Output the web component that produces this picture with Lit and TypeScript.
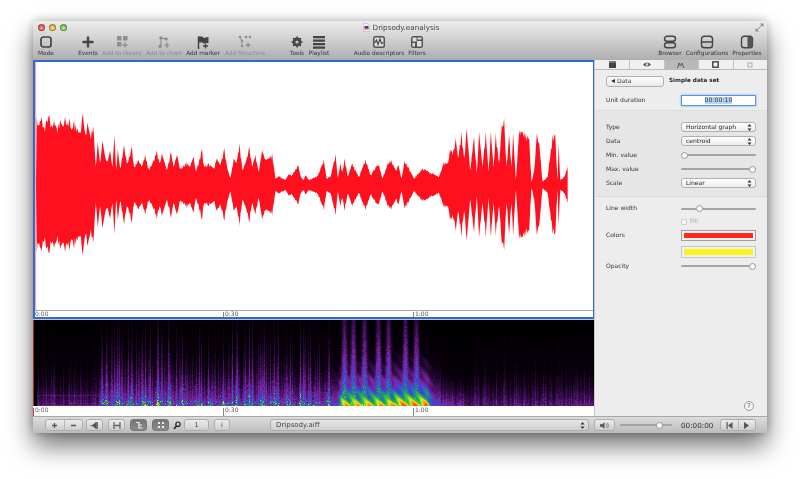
import { LitElement, html, css, svg } from "lit";
import { customElement } from "lit/decorators.js";

const top1: number[][] = [[20,50],[25,75],[35,52],[42,80],[50,60],[58,45],[65,75],[72,62],[80,85],[90,58],[98,80],[105,50],[112,70],[118,55],[125,90],[132,60],[142,85],[150,100],[158,40],[165,100],[172,68],[180,105],[190,80],[197,200],[203,125],[210,190],[217,122],[225,170],[232,185],[240,152],[247,200],[253,105],[258,210],[263,148],[270,205],[282,135],[290,190],[297,170],[305,140],[312,200],[325,180],[335,200],[345,165],[355,205],[365,195],[380,150],[388,190],[395,160],[410,210],[422,155],[430,200],[440,165],[450,205],[470,185],[478,200],[490,170],[497,215],[515,148],[522,200],[535,190],[550,205],[560,175],[570,195],[582,145],[590,200],[600,235],[610,175],[618,190],[628,130],[636,210],[645,190],[657,140],[665,200],[675,165],[685,215],[695,150],[705,178],[715,175],[725,160],[735,235],[745,228],[765,240],[775,222],[785,225],[803,195]];
const top2: number[][] = [[0,228],[8,240],[15,225],[25,240],[35,235],[50,228],[60,205],[70,178],[78,235],[90,230],[105,162],[112,235],[120,190],[125,215],[132,175],[142,230],[155,190],[175,230],[195,178],[210,225],[225,200],[235,195],[245,235],[262,190],[272,180],[285,210],[293,195],[303,235],[312,182],[325,205],[340,235],[365,205],[385,215],[415,230],[430,185],[442,190],[448,148],[458,150],[465,115],[472,175],[482,95],[490,175],[498,85],[508,210],[520,110],[528,220],[535,95],[545,200],[555,95],[563,215],[570,95],[578,200],[585,100],[595,190],[603,75],[610,55],[617,200],[625,105],[632,200],[637,100],[645,240],[655,90],[665,95],[675,100],[685,115],[692,245],[700,210],[708,100],[715,130],[725,245],[740,230],[755,105],[763,105],[770,240],[773,130],[778,240],[790,230],[800,200]];

const wavePts = (): string => {
  const raw = [
    ...top1.map(([x, y]) => [30 + x / 3, (255 - y) / 3]),
    ...top2.map(([x, y]) => [300 + x / 3, (255 - y) / 3]),
  ];
  let s = 777;
  const rnd = () => ((s = (s * 1664525 + 1013904223) >>> 0) / 4294967296);
  const pts: number[][] = [];
  for (let i = 0; i < raw.length - 1; i++) {
    const [x0, a0] = raw[i], [x1, a1] = raw[i + 1];
    pts.push([x0, a0]);
    const n = Math.floor((x1 - x0) / 0.8);
    for (let k = 1; k < n; k++) {
      const t = k / n;
      const a = a0 + (a1 - a0) * t;
      pts.push([x0 + (x1 - x0) * t, a * (0.84 + 0.16 * (k % 2 ? rnd() : 1))]);
    }
  }
  pts.push(raw[raw.length - 1]);
  const up = pts.map(([x, a]) => `${x.toFixed(1)},${(185 - a).toFixed(1)}`);
  const down = pts.slice().reverse().map(([x, a]) => `${x.toFixed(1)},${(185 + a * 0.98).toFixed(1)}`);
  return [...up, "566.7,185", ...down, "36,185"].join(" ");
};

const ic = (body: unknown, w = 18, h = 14) =>
  html`<svg width=${w} height=${h} viewBox="0 0 ${w} ${h}">${body}</svg>`;

const D = "#444";
const G = "#8e8e8e";
const icons: Record<string, unknown> = {
  mode: ic(svg`<rect x="4" y="2" width="10" height="10" rx="2.5" fill="none" stroke=${D} stroke-width="1.7"/>`),
  events: ic(svg`<path d="M9 1.5v11M3.5 7h11" stroke=${D} stroke-width="2.4"/>`),
  library: ic(svg`<g fill=${G}><rect x="4" y="1" width="4.5" height="4.5" rx=".6"/><rect x="10" y="1" width="4.5" height="4.5" rx=".6"/><rect x="4" y="7" width="4.5" height="4.5" rx=".6"/></g><path d="M12 7.5v5M9.5 10h5" stroke=${G} stroke-width="1.4"/>`),
  chart: ic(svg`<path d="M6 11V3.5h5" stroke=${G} stroke-width="1.2" fill="none"/><circle cx="6" cy="3" r="1.7" fill=${G}/><circle cx="11" cy="4" r="1.7" fill=${G}/><circle cx="5" cy="11.5" r="1.7" fill=${G}/><path d="M12 7.5v5.500M9.500 10.200h5" stroke=${G} stroke-width="1.3"/>`),
  marker: ic(svg`<path d="M4.500 14V1.500" stroke=${D} stroke-width="1.500"/><path d="M4.500 1.500h4l1 1.500 5-1v6l-5 .5-1-1h-4z" fill=${D}/><path d="M11.500 8.500v5M9 11h5" stroke=${D} stroke-width="1.300"/>`),
  structure: ic(svg`<g fill=${G}><circle cx="4" cy="2" r="1.300"/><circle cx="10" cy="2" r="1.300"/><circle cx="14" cy="2" r="1.300"/><circle cx="6" cy="6" r="1.300"/><circle cx="6" cy="11" r="1.300"/></g><path d="M4 2l2 4v5" stroke=${G} fill="none"/><path d="M12 7.500v5M9.500 10h5" stroke=${G} stroke-width="1.300"/>`),
  tools: ic(svg`<circle cx="9" cy="7" r="3.400" fill="none" stroke=${D} stroke-width="2"/><path d="M9 1.500v11M3.500 7h11M5.100 3.100l7.800 7.800M12.900 3.100l-7.800 7.800" stroke=${D} stroke-width="1.500"/><circle cx="9" cy="7" r="1.600" fill="#c6c6c6"/>`),
  playlist: ic(svg`<path d="M3 2.200h12M3 5.700h12M3 9.200h12M3 12.700h12" stroke=${D} stroke-width="2.200"/>`),
  audio: ic(svg`<rect x="3" y="1" width="12" height="12" rx="2.500" fill="#555"/><rect x="4.500" y="2.500" width="9" height="9" rx="1" fill="#ddd"/><path d="M4.500 8l2-3 1.500 4.500L10 4l1.500 4.500 2-1" stroke="#444" stroke-width="1.100" fill="none"/>`),
  filters: ic(svg`<rect x="3" y="1" width="12" height="12" rx="2.500" fill="#555"/><rect x="4.500" y="2.500" width="4" height="4" fill="#ddd"/><rect x="9.500" y="2.500" width="4" height="2" fill="#ddd"/><rect x="4.500" y="8" width="2.500" height="3.500" fill="#ddd"/><rect x="9" y="6" width="4.500" height="5.500" fill="#ddd"/>`),
  browser: ic(svg`<g fill="none" stroke=${D} stroke-width="1.400"><rect x="3.500" y="1.200" width="11" height="5" rx="2.500"/><rect x="3.500" y="7.800" width="11" height="5" rx="2.500"/></g>`),
  configs: ic(svg`<rect x="3.500" y="1.200" width="11" height="11.600" rx="2.800" fill="none" stroke=${D} stroke-width="1.400"/><path d="M3.500 7h11" stroke=${D} stroke-width="1.400"/>`),
  props: ic(svg`<rect x="3.500" y="1.200" width="11" height="11.600" rx="2.800" fill="#d0d0d0" stroke=${D} stroke-width="1.400"/><path d="M9.500 1.200h2.200a2.800 2.800 0 0 1 2.800 2.800v6a2.800 2.800 0 0 1-2.800 2.800H9.500z" fill="#555"/>`),
};

const tools = [
  ["Mode", "mode", ""], null, ["Events", "events", ""],
  ["Add to library", "library", "off"], ["Add to chart", "chart", "off"], ["Add marker", "marker", ""],
  ["Add Structure", "structure", "off"], null, ["Tools", "tools", ""], ["Playlist", "playlist", ""], null,
  ["Audio descriptors", "audio", ""], ["Filters", "filters", ""], null,
  ["Browser", "browser", ""], ["Configurations", "configs", ""], ["Properties", "props", ""],
] as (string[] | null)[];

const arrows = html`<svg class="arr" width="5" height="7" viewBox="0 0 5 7"><path d="M2.500 0l2 2.500h-4zM2.500 7l-2-2.500h4z" fill="#333"/></svg>`;

const stops: [number, number, number, number][] = [
  [0, 0, 0, 0], [0.08, 12, 0, 16], [0.18, 56, 14, 80], [0.3, 125, 36, 160], [0.42, 60, 70, 215],
  [0.54, 30, 140, 140], [0.66, 50, 200, 50], [0.8, 235, 230, 30], [0.92, 255, 140, 20], [1, 255, 80, 10],
];
const colorOf = (v: number): number[] => {
  const t = Math.max(0, Math.min(1, v));
  for (let i = 1; i < stops.length; i++) {
    if (t <= stops[i][0]) {
      const a = stops[i - 1], b = stops[i], k = (t - a[0]) / (b[0] - a[0]);
      return [a[1] + (b[1] - a[1]) * k, a[2] + (b[2] - a[2]) * k, a[3] + (b[3] - a[3]) * k];
    }
  }
  return [255, 80, 10];
};

@customElement("spectro-view")
class SpectroView extends LitElement {
  static styles = css`
    :host { display: block; height: 86px; background: #000; overflow: hidden; }
    canvas { display: block; width: 561px; height: 86px; filter: blur(0.4px); }
  `;
  firstUpdated() {
    const c = this.renderRoot.querySelector("canvas") as HTMLCanvasElement;
    const W = 561, H = 86;
    const ctx = c.getContext("2d")!;
    const im = ctx.createImageData(W, H);
    let s = 12345;
    const rnd = () => ((s = (s * 1664525 + 1013904223) >>> 0) / 4294967296);
    const bursts = [343, 352, 363, 377, 387, 404, 415];
    const col: number[] = [];
    for (let i = 0; i < W; i++) col.push(Math.pow(rnd(), 1.5));
    for (let i = 0; i < W; i++) {
      const x = 33 + i;
      const cn = 0.5 + 0.5 * Math.max(col[i], 0.6 * (col[i - 1] ?? 0), 0.6 * (col[i + 1] ?? 0));
      const mod = 0.65 + 0.35 * Math.sin((x - 100) * 0.48);
      const tall = 22 + 24 * col[i];
      let L: number, Hh: number;
      if (x < 36) { L = 0; Hh = 1; }
      else if (x < 98) { L = 0.3; Hh = 20 + 14 * col[i]; }
      else if (x < 330) { L = 0.62 * (0.7 + 0.3 * mod); Hh = tall; }
      else if (x < 440) { L = 0.48; Hh = 24; }
      else if (x < 470) { L = 0.42 - (x - 440) * 0.004; Hh = 20; }
      else { L = 0.3; Hh = 20 + 12 * col[i]; }
      for (let y = 0; y < H; y++) {
        const d = H - 1 - y;
        const n = 0.8 + 0.4 * rnd();
        let v = L * (x >= 330 && x < 440 ? 0.85 : cn) * Math.exp(-d / Hh) * n;
        if (x >= 36 && x < 98 && Math.abs(d - 10) < 1) v += 0.06;
        if (x >= 98 && x < 330) {
          const cl = Math.max(0, Math.sin((x - 100) * 0.48));
          if (d < 22 && rnd() < 0.14 * cl * cl) v += 0.3 * (1 - d / 30);
          if (d < 5 && rnd() < 0.12) v += 0.25;
        }
        if (x >= 332 && x < 440) {
          const fade = x < 340 ? (x - 332) / 8 : x > 425 ? Math.max(0, (440 - x) / 15) : 1;
          const lift = x > 392 && x < 428 ? 1.06 : 0.96;
          const arc = Math.sin(x * 0.55 + d * 0.45);
          const floor = fade * lift * Math.exp(-d / 22) * (0.84 + 0.16 * arc);
          let peak = 0;
          for (const b of bursts) {
            const w = 3.2 + 6.5 * Math.exp(-d / 16);
            const a = 0.68 * Math.exp(-d / 62) * Math.exp(-(((x - b) / w) ** 2));
            peak = Math.max(peak, a);
          }
          if (x > 425) peak *= fade;
          v = Math.max(v, floor, peak * (0.8 + 0.4 * rnd()));
        }
        if (d === 0 && x < 330 && x >= 36) v = Math.max(v, 0.26);
        const [r, gg, b] = colorOf(v);
        const p = (y * W + i) * 4;
        im.data[p] = r; im.data[p + 1] = gg; im.data[p + 2] = b; im.data[p + 3] = 255;
      }
    }
    ctx.putImageData(im, 0, 0);
  }
  render() {
    return html`<canvas width="561" height="86"></canvas>`;
  }
}

@customElement("app-root")
export class AppRoot extends LitElement {
  static styles = css`
    :host {
      display: block; width: 800px; height: 479px; box-sizing: border-box; padding: 21px 33px 0;
      background: #fff; overflow: hidden; font-family: "DejaVu Sans", sans-serif; font-size: 6px; color: #333;
      text-rendering: geometricPrecision;
    }
    .window {
      width: 734px; height: 412px; display: flex; flex-direction: column; border-radius: 4px 4px 3px 3px;
      box-shadow: 0 13px 26px rgba(0,0,0,.55), 0 0 8px rgba(0,0,0,.25); background: #ededed; overflow: hidden;
      filter: blur(0.3px);
    }
    .chrome { height: 39px; flex: none; background: linear-gradient(#ececec, #d8d8d8 35%, #aeaeae); display: flex; flex-direction: column; }
    .title { height: 13px; flex: none; display: flex; align-items: center; padding: 0 3px 0 5px; }
    .lights { display: flex; gap: 4px; width: 90px; }
    .light { width: 7px; height: 7px; border-radius: 50%; border: .5px solid rgba(0,0,0,.35); box-sizing: border-box; }
    .r { background: radial-gradient(circle at 50% 70%, #ff9a90, #d8423a); }
    .y { background: radial-gradient(circle at 50% 70%, #ffe08a, #dc9a28); }
    .g { background: radial-gradient(circle at 50% 70%, #c0ec9a, #6aae40); }
    .name { flex: 1; display: flex; justify-content: center; align-items: center; gap: 3px; font-size: 7.2px; color: #444; }
    .exp { width: 90px; display: flex; justify-content: flex-end; }
    .bar { flex: 1; padding-top: 1px; display: grid; grid-template-columns: 26px 15px 28px 40px 44px 34px 50px 14px 26px 18px 26px 50px 26px 1fr 32px 42px 38px 1px; }
    .tool { display: flex; flex-direction: column; align-items: center; white-space: nowrap; font-size: 5.8px; color: #333; }
    .tool span { margin-top: 1px; line-height: 8px; }
    .tool.off span { color: #8a8a8a; }
    .main { flex: 1; display: flex; min-height: 0; }
    .left { width: 561px; flex: none; display: flex; flex-direction: column; background: #c4c4c4; }
    .wave { height: 259px; box-sizing: border-box; border: 2px solid #2f6bc9; border-right-width: 1px; background: #fff; display: flex; flex-direction: column; flex: none; }
    .wave svg { display: block; flex: 1; min-height: 0; }
    .ruler { display: flex; background: #fff; font-size: 6px; color: #555; line-height: 1; overflow: hidden; }
    .ruler.a { height: 7px; border-top: 1px solid #aaa; padding-top: 1px; box-sizing: border-box; flex: none; }
    .ruler.b { height: 10px; padding-top: 2px; box-sizing: border-box; flex: none; }
    .tick { width: 190px; flex: none; box-sizing: border-box; padding-left: 1px; border-left: 1px solid #888; }
    .a .tick:first-child { width: 188px; padding-left: 0; border-left: 0; }
    .b .tick:first-child { width: 190px; padding-left: 1px; border-left-color: #c04040; }
    .gap { height: 1px; flex: none; }
    .spec { border-left: 1px solid #a03030; }
    .panel { flex: 1; border-left: 1px solid #c8c8c8; display: flex; flex-direction: column; background: #ededed; font-size: 6px; }
    .tabs { height: 9px; flex: none; display: grid; grid-template-columns: repeat(5, 1fr); background: #f0f0f0; border-bottom: 1px solid #bbb; }
    .tab { display: flex; align-items: center; justify-content: center; border-left: 1px solid #c4c4c4; }
    .tab:first-child { border-left: 0; }
    .tab.on { background: #b9b9b9; }
    .sec { padding: 0 11px; flex: none; }
    .s1 { height: 40px; }
    .s2 { height: 87px; background: #e6e6e6; border-top: 1px solid #dedede; border-bottom: 1px solid #d8d8d8; box-sizing: border-box; padding-top: 9.500px; }
    .s3 { flex: 1; padding-top: 5px; display: flex; flex-direction: column; }
    .row { display: flex; align-items: center; height: 13.900px; flex: none; }
    .s3 .row { height: 13.500px; }
    .lab { width: 75px; flex: none; }
    .ctl { width: 75px; flex: none; }
    .head { height: 11px; margin-top: 5.500px; display: flex; align-items: center; }
    .back { width: 58px; height: 11px; box-sizing: border-box; border: 1px solid #b0b0b0; border-radius: 3px; background: linear-gradient(#fff, #e8e8e8); display: flex; align-items: center; gap: 2px; padding-left: 4px; margin-right: 5px; font-size: 6px; }
    .back i { width: 0; height: 0; border: 2.500px solid transparent; border-right: 4px solid #333; border-left: 0; }
    .strong { font-weight: bold; font-size: 5.700px; color: #222; }
    .row.dur { margin-top: 7.500px; height: 12px; }
    .input { height: 11px; background: #fff; border: 1px solid #5d94d8; box-shadow: 0 0 2px #6ea4ea; display: flex; justify-content: center; align-items: center; box-sizing: border-box; font-size: 6.200px; }
    .input b { background: #b8d4f5; font-weight: normal; }
    .sel { height: 10px; box-sizing: border-box; border: 1px solid #b0b0b0; border-radius: 3px; background: linear-gradient(#fff, #ececec); display: flex; align-items: center; justify-content: space-between; padding: 0 3px 0 4px; font-size: 6px; color: #222; }
    .slider { height: 8px; position: relative; display: flex; align-items: center; }
    .slider::before { content: ""; display: block; flex: 1; height: 2px; background: #a4a4a4; border-radius: 1px; }
    .thumb { position: absolute; top: .5px; width: 7px; height: 7px; box-sizing: border-box; border-radius: 50%; border: 1px solid #999; background: #fbfbfb; }
    .check { width: 6px; height: 6px; border: 1px solid #c8c8c8; border-radius: 1.500px; box-sizing: border-box; background: #f4f4f4; margin-right: 3px; }
    .fill { display: flex; align-items: center; color: #a8a8a8; font-size: 6px; height: 8px; margin: 2px 0 0 75px; flex: none; }
    .well { height: 11.500px; box-sizing: border-box; border: 1px solid #a0a0a0; background: #f0f0f0; padding: 2px; display: flex; }
    .well i { flex: 1; }
    .well.faded { border-color: #c8c8c8; margin-left: 75px; width: 75px; margin-top: 4px; flex: none; }
    .help { margin: auto 2px 5px auto; width: 10px; height: 10px; box-sizing: border-box; border: 1px solid #999; border-radius: 50%; display: flex; align-items: center; justify-content: center; font-size: 6.500px; background: #f4f4f4; color: #555; }
    .foot { height: 17px; flex: none; background: linear-gradient(#dcdcdc, #bcbcbc); border-top: 1px solid #a8a8a8; box-sizing: border-box; display: flex; align-items: center; padding-left: 12px; font-size: 6.500px; }
    .btn { height: 12px; box-sizing: border-box; border: 1px solid #adadad; border-radius: 3px; background: linear-gradient(#ececec, #cdcdcd); display: flex; align-items: center; justify-content: center; color: #444; flex: none; }
    .btn.dark { background: linear-gradient(#777, #8a8a8a); border-color: #777; }
    .w17 { width: 17px; }
    .pair { display: flex; overflow: hidden; padding: 0; }
    .pair > div { flex: 1; height: 100%; display: flex; align-items: center; justify-content: center; }
    .pair > div + div { border-left: 1px solid #b9b9b9; }
    .file { width: 319px; justify-content: space-between; padding: 0 3px 0 5px; font-size: 7px; margin: 0 5px 0 40px; background: linear-gradient(#e6e6e6, #cfcfcf); }
    .vol { width: 52px; margin-left: 5px; flex: none; }
    .time { margin: 0 6px 0 9px; font-size: 7.200px; color: #333; white-space: nowrap; width: 33px; }
    .gs3 { width: 3px; flex: none; } .gs4 { width: 4px; flex: none; } .gs5 { width: 5px; flex: none; }
    .mt3 { margin-top: 3px; } .mt2 { margin-top: 2px; }
    .w38 { width: 38px; } .w36 { width: 36px; } .w25 { width: 25px; } .w16 { width: 16px; } .w21 { width: 21px; }
    .mag { flex: none; }
    .red { background: #ff2a1a; } .yel { background: #fbf41e; }
  `;

  slider(pct: number) {
    return html`<div class="slider"><div class="thumb" style="left:${pct}%"></div></div>`;
  }

  render() {
    return html`<div class="window">
      <div class="chrome">
        <div class="title">
          <div class="lights"><div class="light r"></div><div class="light y"></div><div class="light g"></div></div>
          <div class="name">
            <svg width="7" height="9" viewBox="0 0 7 9"><path d="M.5.500h4l2 2v6h-6z" fill="#f4f4f4" stroke="#aaa" stroke-width=".5"/><rect x="1.500" y="3" width="4" height="3.500" fill="#5a2aa8"/><rect x="1.500" y="5.500" width="4" height="1" fill="#e8c020"/></svg>
            <span>Dripsody.eanalysis</span>
          </div>
          <div class="exp"><svg width="9" height="9" viewBox="0 0 9 9"><path d="M5 .500h3.500V4zM4 8.500H.5V5z" fill="#8a8a8a"/><path d="M7 2L2 7" stroke="#8a8a8a"/></svg></div>
        </div>
        <div class="bar">
          ${tools.map((t) => t ? html`<div class="tool ${t[2]}">${icons[t[1]]}<span>${t[0]}</span></div>` : html`<div></div>`)}
          <div></div>
        </div>
      </div>
      <div class="main">
        <div class="left">
          <div class="wave">
            <svg viewBox="35 62 557 248" preserveAspectRatio="none"><rect x="35" y="62" width="1.200" height="248" fill="#f8a8b8"/><polygon points=${wavePts()} fill="#ff101e"/></svg>
            <div class="ruler a"><div class="tick">0:00</div><div class="tick">0:30</div><div class="tick">1:00</div></div>
          </div>
          <div class="gap"></div>
          <spectro-view class="spec"></spectro-view>
          <div class="ruler b"><div class="tick">0:00</div><div class="tick">0:30</div><div class="tick">1:00</div></div>
        </div>
        <div class="panel">
          <div class="tabs">
            <div class="tab"><svg width="7" height="7"><rect width="7" height="7" fill="#444"/><rect width="7" height="2" fill="#777"/></svg></div>
            <div class="tab"><svg width="8" height="5" viewBox="0 0 8 5"><path d="M0 2.500C2 0 6 0 8 2.500 6 5 2 5 0 2.500z" fill="#555"/><circle cx="4" cy="2.500" r="1.200" fill="#ddd"/></svg></div>
            <div class="tab on"><svg width="8" height="6" viewBox="0 0 8 6"><path d="M.5 6l1.500-5 1.500 3 1.500-3 2 5" fill="none" stroke="#444" stroke-width=".8"/></svg></div>
            <div class="tab"><svg width="7" height="7"><rect x=".8" y=".8" width="5.400" height="5.400" fill="none" stroke="#333" stroke-width="1.300"/></svg></div>
            <div class="tab"><svg width="6" height="6"><rect x="1" y="1" width="4" height="4" fill="none" stroke="#aaa"/></svg></div>
          </div>
          <div class="sec s1">
            <div class="head"><div class="back"><i></i>Data</div><span class="strong">Simple data set</span></div>
            <div class="row dur"><div class="lab">Unit duration</div><div class="ctl input"><b>00:00:10</b></div></div>
          </div>
          <div class="sec s2">
            <div class="row"><div class="lab">Type</div><div class="ctl sel">Horizontal graph ${arrows}</div></div>
            <div class="row"><div class="lab">Data</div><div class="ctl sel">centroid ${arrows}</div></div>
            <div class="row"><div class="lab">Min. value</div><div class="ctl">${this.slider(0)}</div></div>
            <div class="row"><div class="lab">Max. value</div><div class="ctl">${this.slider(91)}</div></div>
            <div class="row"><div class="lab">Scale</div><div class="ctl sel">Linear ${arrows}</div></div>
          </div>
          <div class="sec s3">
            <div class="row"><div class="lab">Line width</div><div class="ctl">${this.slider(20)}</div></div>
            <div class="fill"><div class="check"></div>Fill</div>
            <div class="row mt3"><div class="lab">Colors</div><div class="ctl well"><i class="red"></i></div></div>
            <div class="well faded"><i class="yel"></i></div>
            <div class="row mt2"><div class="lab">Opacity</div><div class="ctl">${this.slider(91)}</div></div>
            <div class="help">?</div>
          </div>
        </div>
      </div>
      <div class="foot">
        <div class="btn pair w38">
          <div><svg width="7" height="7" viewBox="0 0 7 7"><path d="M3.500 1v5M1 3.500h5" stroke="#555" stroke-width="1.300"/></svg></div>
          <div><svg width="7" height="7" viewBox="0 0 7 7"><path d="M1 3.500h5" stroke="#555" stroke-width="1.300"/></svg></div>
        </div>
        <div class="gs3"></div>
        <div class="btn w17"><svg width="9" height="7" viewBox="0 0 9 7"><path d="M0 3.500h3M2 3.500L6 .5v6z" fill="#555" stroke="#555" stroke-width=".6"/><rect x="6.300" width="1.500" height="7" fill="#555"/></svg></div>
        <div class="gs5"></div>
        <div class="btn w17"><svg width="8" height="7" viewBox="0 0 8 7"><path d="M1 0v7M7 0v7M1 3.500h6" stroke="#666" stroke-width="1.300"/></svg></div>
        <div class="gs5"></div>
        <div class="btn w17 dark"><svg width="8" height="8" viewBox="0 0 8 8"><path d="M1 1.500h3v5.500h3.500M4 4h3" fill="none" stroke="#eee" stroke-width="1.200"/></svg></div>
        <div class="gs5"></div>
        <div class="btn w17 dark"><svg width="8" height="8" viewBox="0 0 8 8"><path d="M1 1h2v2H1zM5 1h2v2H5zM1 5h2v2H1zM5 5h2v2H5z" fill="#eee"/></svg></div>
        <div class="gs4"></div>
        <svg class="mag" width="8" height="9" viewBox="0 0 8 9"><circle cx="5" cy="3.200" r="2.200" fill="none" stroke="#222" stroke-width="1.200"/><path d="M3.500 5L1 8" stroke="#222" stroke-width="1.500"/></svg>
        <div class="gs3"></div>
        <div class="btn w25">1</div>
        <div class="gs5"></div>
        <div class="btn w16">i</div>
        <div class="btn file"><span>Dripsody.aiff</span>${arrows}</div>
        <div class="btn w21"><svg width="9" height="7" viewBox="0 0 9 7"><path d="M0 2.300h2L4.500.3v6.400L2 4.700H0z" fill="#555"/><path d="M6 1.500q1.500 2 0 4M7.500.8q2 2.700 0 5.400" stroke="#666" stroke-width=".7" fill="none"/></svg></div>
        <div class="vol">${this.slider(70)}</div>
        <div class="time">00:00:00</div>
        <div class="btn pair w36">
          <div><svg width="7" height="7" viewBox="0 0 7 7"><path d="M.5 0h1.200v7H.5zM6.500 0v7L2 3.500z" fill="#555"/></svg></div>
          <div><svg width="7" height="7" viewBox="0 0 7 7"><path d="M1 0l5 3.500L1 7z" fill="#555"/></svg></div>
        </div>
      </div>
    </div>`;
  }
}
void SpectroView;
